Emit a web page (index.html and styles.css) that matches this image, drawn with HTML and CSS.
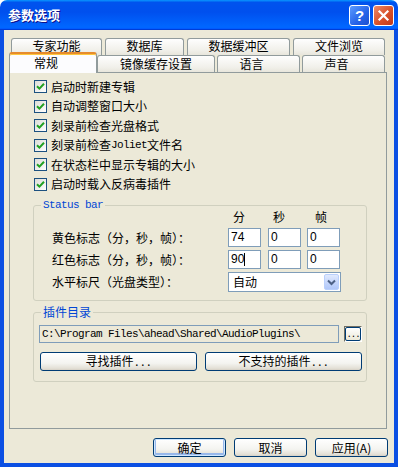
FILE: index.html
```html
<!DOCTYPE html>
<html>
<head>
    <title>参数选项</title>
    <link rel="stylesheet" href="styles.css">
</head>
<body>
    <div class="window">
        <div class="titlebar">
            <span class="title">参数选项</span>
            <div class="title-buttons">
                <span class="tb-btn help">?</span>
                <span class="tb-btn close">
                    <svg width="13" height="13" viewBox="0 0 13 13"><path d="M2.5 2.5 L10.5 10.5 M10.5 2.5 L2.5 10.5" stroke="#fff" stroke-width="2.2" stroke-linecap="square"/></svg>
                </span>
            </div>
        </div>
        <div class="client">
            <div class="tab-row back">
                <div class="tab w91">专家功能</div>
                <div class="tab w79">数据库</div>
                <div class="tab w103">数据缓冲区</div>
                <div class="tab w92">文件浏览</div>
            </div>
            <div class="tab-row front">
                <div class="tab selected">常规</div>
                <div class="tab w118">镜像缓存设置</div>
                <div class="tab w83 shift">语言</div>
                <div class="tab w83 shift">声音</div>
            </div>

            <div class="panel">
                <div class="checks">
                    <div class="check"><span class="box"><svg width="9" height="9" viewBox="0 0 9 9"><path d="M1 4.2 L3.4 6.6 L8 1.8" fill="none" stroke="#21A121" stroke-width="2"/></svg></span>启动时新建专辑</div>
                    <div class="check"><span class="box"><svg width="9" height="9" viewBox="0 0 9 9"><path d="M1 4.2 L3.4 6.6 L8 1.8" fill="none" stroke="#21A121" stroke-width="2"/></svg></span>自动调整窗口大小</div>
                    <div class="check"><span class="box"><svg width="9" height="9" viewBox="0 0 9 9"><path d="M1 4.2 L3.4 6.6 L8 1.8" fill="none" stroke="#21A121" stroke-width="2"/></svg></span>刻录前检查光盘格式</div>
                    <div class="check"><span class="box"><svg width="9" height="9" viewBox="0 0 9 9"><path d="M1 4.2 L3.4 6.6 L8 1.8" fill="none" stroke="#21A121" stroke-width="2"/></svg></span>刻录前检查<span class="mono">Joliet</span>文件名</div>
                    <div class="check"><span class="box"><svg width="9" height="9" viewBox="0 0 9 9"><path d="M1 4.2 L3.4 6.6 L8 1.8" fill="none" stroke="#21A121" stroke-width="2"/></svg></span>在状态栏中显示专辑的大小</div>
                    <div class="check"><span class="box"><svg width="9" height="9" viewBox="0 0 9 9"><path d="M1 4.2 L3.4 6.6 L8 1.8" fill="none" stroke="#21A121" stroke-width="2"/></svg></span>启动时载入反病毒插件</div>
                </div>

                <fieldset class="group">
                    <legend class="legend mono">Status bar</legend>
                    <div class="status-body">
                        <div class="heads">
                            <span class="head w40">分</span>
                            <span class="head w42">秒</span>
                            <span class="head">帧</span>
                        </div>
                        <div class="row first">
                            <span class="label">黄色标志（分，秒，帧）：</span>
                            <span class="field">74</span>
                            <span class="field gap7">0</span>
                            <span class="field gap6">0</span>
                        </div>
                        <div class="row">
                            <span class="label">红色标志（分，秒，帧）：</span>
                            <span class="field">90<span class="caret"></span></span>
                            <span class="field gap7">0</span>
                            <span class="field gap6">0</span>
                        </div>
                        <div class="row">
                            <span class="label">水平标尺（光盘类型）：</span>
                            <div class="combo">
                                <span class="combo-text">自动</span>
                                <span class="combo-arrow">
                                    <svg width="9" height="7" viewBox="0 0 9 7"><path d="M1 1.5 L4.5 5 L8 1.5" fill="none" stroke="#4D6185" stroke-width="2"/></svg>
                                </span>
                            </div>
                        </div>
                    </div>
                </fieldset>

                <fieldset class="group">
                    <legend class="legend">插件目录</legend>
                    <div class="plugin-body">
                        <div class="path-row">
                            <span class="path mono">C:\Program Files\ahead\Shared\AudioPlugins\</span>
                            <span class="browse"><span class="browse-inner">...</span></span>
                        </div>
                        <div class="btn-row">
                            <button class="btn wide">寻找插件<span class="mono">...</span></button>
                            <button class="btn wide">不支持的插件<span class="mono">...</span></button>
                        </div>
                    </div>
                </fieldset>
            </div>

            <div class="footer">
                <button class="btn dlg default">确定</button>
                <button class="btn dlg">取消</button>
                <button class="btn dlg">应用(A)</button>
            </div>
        </div>
    </div>
</body>
</html>
```

FILE: styles.css
```css
body {
    margin: 0;
    background-color: #ffffff;
    font-family: "Noto Sans CJK SC", "Liberation Sans", sans-serif;
    font-size: 12px;
    color: #000;
}

.window {
    width: 398px;
    height: 467px;
    display: flex;
    flex-direction: column;
}

/* Title bar */
.titlebar {
    flex: none;
    height: 30px;
    box-sizing: border-box;
    display: flex;
    align-items: center;
    padding: 0 4px 0 8px;
    border-radius: 7px 7px 0 0;
    background: linear-gradient(#0997ff 0%, #0053ee 8%, #0050ee 40%, #0066ff 88%, #0066ff 93%, #005bff 95%, #003dd7 96%, #003dd7 100%);
}

.title {
    flex: 1;
    color: #fff;
    font-weight: bold;
    font-size: 13px;
    line-height: 16px;
    text-shadow: 1px 1px #0f1089;
}

.title-buttons {
    display: flex;
    gap: 3px;
}

.tb-btn {
    width: 21px;
    height: 21px;
    box-sizing: border-box;
    border: 1px solid #fff;
    border-radius: 3px;
    display: flex;
    align-items: center;
    justify-content: center;
}

.help {
    background: linear-gradient(135deg, #5a9bff, #2663e8 60%, #1c4fd0);
    color: #fff;
    font: bold 15px/19px "Liberation Sans", sans-serif;
}

.close {
    background: linear-gradient(135deg, #eb8a69, #d9512a 55%, #c1391a);
}

/* Client area */
.client {
    flex: 1;
    box-sizing: border-box;
    background-color: #ece9d8;
    border: 4px solid #0b4fe3;
    border-top: 0;
    padding-top: 8px;
}

/* Tabs */
.tab-row {
    display: flex;
    height: 17px;
}

.back {
    margin-left: 7px;
    gap: 3px;
}

.front {
    margin-left: 5px;
    align-items: flex-end;
}

.tab {
    box-sizing: border-box;
    height: 17px;
    padding-top: 1px;
    border: 1px solid #919b9c;
    border-bottom: 0;
    border-radius: 3px 3px 0 0;
    background: linear-gradient(#fefefe, #f1f0ea 70%, #e8e6dc);
    text-align: center;
    line-height: 14px;
}

.back .tab {
    padding-top: 0;
}

.tab.selected {
    position: relative;
    z-index: 2;
    width: 88px;
    height: 21px;
    margin-bottom: -1px;
    padding: 2px 14px 0 0;
    border-top: 2px solid #e68b2c;
    box-shadow: inset 0 1px #ffc73c;
    background: #fcfcfe;
    line-height: 13px;
}

.front .tab + .tab {
    margin-left: 2px;
}

.front .selected + .tab {
    margin-left: 0;
}

.tab.shift {
    padding-right: 14px;
}

.w79 { width: 79px; }
.w83 { width: 83px; }
.w91 { width: 91px; }
.w92 { width: 92px; }
.w103 { width: 103px; }
.w118 { width: 118px; }
.w40 { width: 40px; }
.w42 { width: 42px; }

/* Panel */
.panel {
    position: relative;
    z-index: 1;
    box-sizing: border-box;
    width: 378px;
    height: 357px;
    margin-left: 5px;
    border: 1px solid #919b9c;
    background-color: #ece9d8;
}

.checks {
    padding: 4px 0 0 24px;
}

.check {
    display: flex;
    align-items: center;
    height: 19.5px;
    line-height: 14px;
}

.box {
    flex: none;
    width: 13px;
    height: 13px;
    box-sizing: border-box;
    margin-right: 4px;
    border: 1px solid #1c5180;
    background: linear-gradient(135deg, #dcdcd7, #ffffff);
    display: flex;
    align-items: center;
    justify-content: center;
}

.mono {
    font-family: "Liberation Mono", monospace;
    font-size: 11px;
    letter-spacing: -0.6px;
}

/* Group boxes */
.group {
    margin: 5px 19px 0 23px;
    padding: 0;
    min-width: 0;
    border: 1px solid #d0d0bf;
    border-radius: 3px;
}

.legend {
    margin-left: 7px;
    padding: 0 2px;
    color: #0046d5;
    line-height: 12px;
}

.status-body {
    padding: 0 0 8px 18px;
}

.heads {
    display: flex;
    height: 12px;
    line-height: 12px;
    padding-left: 181px;
}

.row {
    display: flex;
    align-items: center;
    margin-top: 3px;
}

.row.first {
    margin-top: 5px;
}

.label {
    width: 176px;
    line-height: 14px;
}

.field {
    width: 33px;
    height: 19px;
    box-sizing: border-box;
    border: 1px solid #7f9db9;
    background-color: #fff;
    padding-left: 2px;
    font: 12px/17px "Liberation Sans", sans-serif;
    display: flex;
    align-items: center;
}

.gap7 { margin-left: 7px; }
.gap6 { margin-left: 6px; }

.caret {
    width: 1px;
    height: 13px;
    background-color: #000;
}

.combo {
    width: 113px;
    height: 20px;
    box-sizing: border-box;
    border: 1px solid #7f9db9;
    background-color: #fff;
    display: flex;
    align-items: center;
}

.combo-text {
    flex: 1;
    padding-left: 4px;
    line-height: 14px;
}

.combo-arrow {
    width: 15px;
    height: 16px;
    margin-right: 1px;
    box-sizing: border-box;
    border: 1px solid #bad0fc;
    border-radius: 2px;
    background: linear-gradient(#e1eafe, #c2d4fb 60%, #b1c8fa);
    display: flex;
    align-items: center;
    justify-content: center;
}

.plugin-body {
    padding: 7px 0 10px 5px;
}

.path-row {
    display: flex;
    align-items: center;
}

.path {
    width: 300px;
    height: 18px;
    box-sizing: border-box;
    border: 1px solid #7f9db9;
    background-color: #ece9d8;
    padding-left: 2px;
    line-height: 16px;
    white-space: nowrap;
    overflow: hidden;
}

.browse {
    width: 18px;
    height: 16px;
    margin-left: 5px;
    box-sizing: border-box;
    border: 1px solid;
    border-color: #716f64 #ffffff #ffffff #716f64;
    display: flex;
}

.browse-inner {
    flex: 1;
    border: 1px solid #003c74;
    border-radius: 2px;
    background: linear-gradient(#ffffff, #ece9d8);
    font: 9px/8px "Liberation Mono", monospace;
    letter-spacing: -1px;
    text-align: center;
    padding-top: 3px;
}

.btn-row {
    display: flex;
    gap: 8px;
    margin-top: 9px;
    padding-left: 1px;
}

/* Buttons */
.btn {
    box-sizing: border-box;
    height: 19px;
    padding: 0;
    border: 1px solid #003c74;
    border-radius: 3px;
    background: linear-gradient(#ffffff, #f4f4f0 60%, #e3e0d6 90%, #d6d0c5);
    font-family: "Noto Sans CJK SC", "Liberation Sans", sans-serif;
    font-size: 12px;
    line-height: 15px;
    color: #000;
    text-align: center;
}

.btn.wide {
    width: 157px;
}

.btn.dlg {
    width: 73px;
}

.btn.default {
    box-shadow: inset 0 0 0 1px #cee7ff, inset 0 -1px 0 2px #98b8ea;
}

.footer {
    display: flex;
    justify-content: flex-end;
    gap: 8px;
    margin-top: 9px;
    padding-right: 6px;
}
```
